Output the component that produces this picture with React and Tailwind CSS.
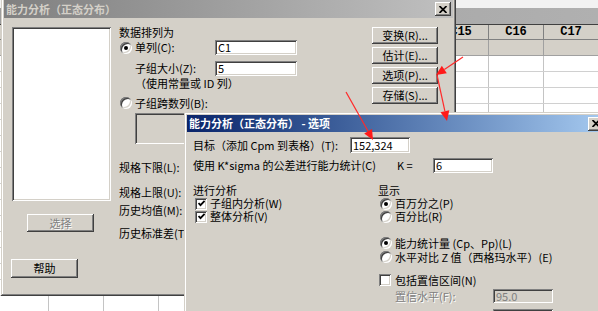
import React from "react";

const BTN =
  "flex items-center justify-center bg-[#d4d0c8] shadow-[inset_-1px_-1px_#404040,inset_1px_1px_#ffffff,inset_-2px_-2px_#808080,inset_2px_2px_#d4d0c8]";
const FIELD =
  "flex items-center pl-[3px] bg-white shadow-[inset_1px_1px_#808080,inset_-1px_-1px_#ffffff,inset_2px_2px_#404040,inset_-2px_-2px_#d4d0c8]";
const FIELD_DIS =
  "flex items-center pl-[3px] bg-[#d4d0c8] text-[#808080] shadow-[inset_1px_1px_#808080,inset_-1px_-1px_#ffffff,inset_2px_2px_#404040,inset_-2px_-2px_#d4d0c8]";
const WIN =
  "bg-[#d4d0c8] p-[3px] shadow-[inset_-1px_-1px_#404040,inset_1px_1px_#d4d0c8,inset_-2px_-2px_#808080,inset_2px_2px_#ffffff]";
const SUNK =
  "shadow-[inset_1px_1px_#808080,inset_-1px_-1px_#ffffff,inset_2px_2px_#404040,inset_-2px_-2px_#d4d0c8]";

function CloseBtn() {
  return (
    <div className={BTN + " w-[16px] h-[14px] shrink-0"}>
      <svg width="8" height="7" viewBox="0 0 8 7">
        <path d="M0.5 0 L7.5 7 M7.5 0 L0.5 7" stroke="#000" strokeWidth="1.7" />
      </svg>
    </div>
  );
}

function Radio({ checked }) {
  return (
    <span
      className={
        "relative block w-[12px] h-[12px] shrink-0 rounded-full bg-white " + SUNK
      }
    >
      {checked && (
        <span className="absolute left-[4px] top-[4px] w-[4px] h-[4px] rounded-full bg-black" />
      )}
    </span>
  );
}

function Check({ checked }) {
  return (
    <span
      className={
        "flex items-center justify-center w-[12px] h-[12px] shrink-0 bg-white " + SUNK
      }
    >
      {checked && (
        <svg width="7" height="7" viewBox="0 0 7 7">
          <path d="M0.5 3 L2.5 5.2 L6.6 0.8" stroke="#000" strokeWidth="1.8" fill="none" />
        </svg>
      )}
    </span>
  );
}

function Sheet() {
  const cols = ["", "", "", "", "", "", "", "", "C15", "C16", "C17"];
  const rows = Array.from({ length: 16 }, (_, i) => i);
  return (
    <div className="absolute inset-0 bg-white flex flex-col overflow-hidden">
      <div className="h-[8px] shrink-0 bg-[#f2f2f2]" />
      <div className="h-[17px] shrink-0 bg-gradient-to-r from-[#9c9c9c] to-[#b0b0b0] border-b border-[#404040]" />
      <div className="h-[15px] shrink-0 flex ml-[-6px] bg-[#d4d0c8] border-b border-[#808080]">
        {cols.map((c, i) => (
          <div
            key={i}
            className="w-[55px] shrink-0 border-r border-[#808080] flex items-center justify-center font-['Liberation_Mono',monospace] font-bold text-[12px] leading-[14px]"
          >
            {c}
          </div>
        ))}
      </div>
      <div className="h-[16px] shrink-0 flex ml-[-6px] bg-[#d4d0c8] border-b border-[#a0a0a0]">
        {cols.map((c, i) => (
          <div key={i} className="w-[55px] shrink-0 border-r border-[#a0a0a0]" />
        ))}
      </div>
      {rows.map((r) => (
        <div key={r} className="h-[16px] shrink-0 flex ml-[-6px] border-b border-[#d0d0d0]">
          {cols.map((c, i) => (
            <div key={i} className="w-[55px] shrink-0 border-r border-[#c4c4c4]" />
          ))}
        </div>
      ))}
    </div>
  );
}

function MainDialog() {
  return (
    <div className={"absolute left-[1px] top-[-3px] w-[455px] h-[299px] flex flex-col " + WIN}>
      <div className="h-[18px] shrink-0 flex items-center justify-between pl-[2px] pr-[2px] bg-gradient-to-r from-[#808080] to-[#c0c0c0]">
        <span className="text-[#d4d0c8] font-bold text-[11px] leading-[13px]">
          能力分析（正态分布）
        </span>
        <CloseBtn />
      </div>
      <div className="flex pt-[1px]">
        {/* left column */}
        <div className="w-[115px] shrink-0 flex flex-col pl-[8px] pt-[8px]">
          <div className={"w-[99px] h-[174px] bg-white " + SUNK} />
          <div
            className={
              BTN +
              " ml-[15px] mt-[13px] w-[67px] h-[18px] text-[#808080] [text-shadow:1px_1px_#ffffff]"
            }
          >
            选择
          </div>
          <div className={BTN + " ml-[-1px] mt-[27px] w-[67px] h-[19px]"}>帮助</div>
        </div>
        {/* middle column */}
        <div className="w-[253px] shrink-0 flex flex-col leading-[13px]">
          <div className="mt-[6px] h-[14px] flex items-center">数据排列为</div>
          <div className="mt-[1px] h-[15px] flex items-center">
            <div className="w-[96px] flex items-center gap-[3px] pl-[1px]">
              <Radio checked />
              <span>单列(C):</span>
            </div>
            <div className={FIELD + " w-[82px] h-[15px]"}>C1</div>
          </div>
          <div className="mt-[6px] h-[15px] flex items-center">
            <div className="w-[96px] pl-[16px]">子组大小(Z):</div>
            <div className={FIELD + " w-[82px] h-[15px]"}>5</div>
          </div>
          <div className="h-[14px] flex items-center pl-[16px]">（使用常量或 ID 列）</div>
          <div className="mt-[6px] h-[14px] flex items-center gap-[3px] pl-[1px]">
            <Radio />
            <span>子组跨数列(B):</span>
          </div>
          <div className={"mt-[3px] ml-[16px] w-[90px] h-[31px] " + SUNK} />
          <div className="mt-[16px] h-[14px] flex items-center">规格下限(L):</div>
          <div className="mt-[11px] h-[14px] flex items-center">规格上限(U):</div>
          <div className="mt-[4px] h-[14px] flex items-center">历史均值(M):</div>
          <div className="mt-[9px] h-[14px] flex items-center">历史标准差(T):</div>
        </div>
        {/* right column */}
        <div className="w-[66px] shrink-0 flex flex-col pt-[8px] gap-[3px] leading-[13px]">
          <div className={BTN + " h-[17px]"}>变换(R)...</div>
          <div className={BTN + " h-[17px]"}>估计(E)...</div>
          <div className={BTN + " h-[17px]"}>选项(P)...</div>
          <div className={BTN + " h-[17px]"}>存储(S)...</div>
        </div>
      </div>
    </div>
  );
}

function OptionsDialog() {
  return (
    <div className={"absolute left-[184px] top-[112px] w-[425px] h-[215px] flex flex-col " + WIN}>
      <div className="h-[17px] shrink-0 flex items-center justify-between pl-[2px] pr-[2px] bg-gradient-to-r from-[#0a246a] to-[#a6caf0]">
        <span className="text-white font-bold text-[11px] leading-[13px]">
          能力分析（正态分布） - 选项
        </span>
        <CloseBtn />
      </div>
      <div className="flex flex-col pl-[6px] leading-[13px]">
        <div className="mt-[5px] h-[16px] flex items-center">
          <div className="w-[157px] shrink-0">目标（添加 Cpm 到表格）(T):</div>
          <div className={FIELD + " w-[60px] h-[16px]"}>152,324</div>
        </div>
        <div className="mt-[5px] h-[15px] flex items-center">
          <div className="w-[204px] shrink-0">使用 K*sigma 的公差进行能力统计(C)</div>
          <div className="w-[36px] shrink-0">K =</div>
          <div className={FIELD + " w-[60px] h-[15px]"}>6</div>
        </div>
        <div className="mt-[10px] flex">
          <div className="w-[185px] shrink-0 flex flex-col">
            <div className="h-[14px] flex items-center">进行分析</div>
            <div className="h-[13px] flex items-center gap-[3px] pl-[2px]">
              <Check checked />
              <span>子组内分析(W)</span>
            </div>
            <div className="h-[13px] flex items-center gap-[3px] pl-[2px]">
              <Check checked />
              <span>整体分析(V)</span>
            </div>
          </div>
          <div className="flex flex-col">
            <div className="h-[14px] flex items-center">显示</div>
            <div className="h-[13px] flex items-center gap-[3px] pl-[2px]">
              <Radio checked />
              <span>百万分之(P)</span>
            </div>
            <div className="h-[13px] flex items-center gap-[3px] pl-[2px]">
              <Radio />
              <span>百分比(R)</span>
            </div>
            <div className="mt-[13px] h-[14px] flex items-center gap-[3px] pl-[2px]">
              <Radio checked />
              <span>能力统计量 (Cp、Pp)(L)</span>
            </div>
            <div className="h-[14px] flex items-center gap-[3px] pl-[2px]">
              <Radio />
              <span>水平对比 Z 值（西格玛水平）(E)</span>
            </div>
            <div className="mt-[9px] h-[14px] flex items-center gap-[4px] pl-[1px]">
              <Check />
              <span>包括置信区间(N)</span>
            </div>
            <div className="mt-[2px] h-[14px] flex items-center pl-[17px]">
              <div className="w-[98px] shrink-0 text-[#808080] [text-shadow:1px_1px_#ffffff]">
                置信水平(F):
              </div>
              <div className={FIELD_DIS + " w-[60px] h-[14px]"}>95.0</div>
            </div>
            <div className="mt-[6px] h-[14px] flex items-center pl-[17px]">
              <div className="w-[98px] shrink-0" />
              <div className={FIELD_DIS + " w-[60px] h-[14px]"} />
            </div>
          </div>
        </div>
      </div>
    </div>
  );
}

function Arrow({ x1, y1, x2, y2 }) {
  const dx = x2 - x1;
  const dy = y2 - y1;
  const len = Math.hypot(dx, dy);
  const ux = dx / len;
  const uy = dy / len;
  const hl = 10;
  const hw = 4.5;
  const bx = x2 - ux * hl;
  const by = y2 - uy * hl;
  const p1 = `${bx - uy * hw},${by + ux * hw}`;
  const p2 = `${bx + uy * hw},${by - ux * hw}`;
  return (
    <g>
      <line x1={x1} y1={y1} x2={bx} y2={by} stroke="#ff2a2a" strokeWidth="1.2" />
      <polygon points={`${x2},${y2} ${p1} ${p2}`} fill="#ff1a1a" />
    </g>
  );
}

export default function App() {
  return (
    <div className="relative w-[598px] h-[311px] overflow-hidden bg-white text-black text-[11px] leading-[13px] font-['Noto_Sans_CJK_SC',sans-serif]">
      <Sheet />
      <MainDialog />
      <OptionsDialog />
      <svg className="absolute left-0 top-0 pointer-events-none" width="598" height="311">
        <Arrow x1={463} y1={57} x2={436} y2={75} />
        <Arrow x1={437} y1={75} x2={447} y2={121} />
        <Arrow x1={346} y1={92} x2={373} y2={140} />
      </svg>
    </div>
  );
}
